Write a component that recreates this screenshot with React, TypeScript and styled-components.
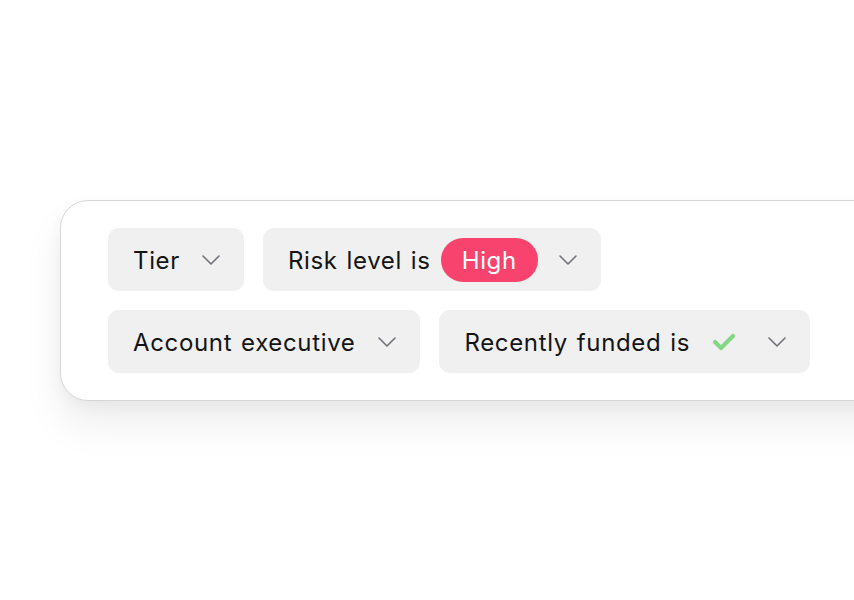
import React from "react";
import styled, { createGlobalStyle } from "styled-components";

const Global = createGlobalStyle`
  html, body { margin: 0; padding: 0; background: #ffffff; }
  body { font-family: Inter, "Noto Sans", sans-serif; overflow: hidden; }
`;

const Page = styled.div`
  width: 854px;
  height: 600px;
  overflow: hidden;
  padding: 200px 0 0 60px;
  box-sizing: border-box;
`;

const Card = styled.div`
  width: 900px;
  box-sizing: border-box;
  background: #ffffff;
  border: 1px solid #d6d6d6;
  border-radius: 28px;
  padding: 27px 0 27px 47px;
  display: flex;
  flex-direction: column;
  gap: 19px;
  box-shadow: 0 24px 40px rgba(0, 0, 0, 0.07), 0 6px 14px rgba(0, 0, 0, 0.04);
`;

const Row = styled.div`
  display: flex;
  gap: 19px;
`;

const Chip = styled.div`
  height: 63px;
  box-sizing: border-box;
  display: flex;
  align-items: center;
  padding: 2px 23px 0 25px;
  background: #f0f0f1;
  border-radius: 11px;
  color: #141414;
  font-size: 24px;
  letter-spacing: 0.65px;
  word-spacing: 1.5px;
`;

const Label = styled.span`
  white-space: pre;
`;

const Pill = styled.span`
  margin-left: 10px;
  margin-top: -2px;
  height: 44px;
  padding: 2px 21px 0;
  box-sizing: border-box;
  display: inline-flex;
  align-items: center;
  border-radius: 22px;
  background: #f7436d;
  color: #ffffff;
  font-size: 24px;
`;

const Chevron = styled.svg<{ $gap: number }>`
  margin-left: ${(p) => p.$gap}px;
  margin-top: -2px;
  flex: none;
`;

const Check = styled.svg`
  margin-left: 22px;
  margin-top: -2px;
  flex: none;
`;

const Down = ({ gap }: { gap: number }) => (
  <Chevron $gap={gap} width="20" height="12" viewBox="0 0 20 12">
    <polyline points="2,2 10,10 18,2" fill="none" stroke="#6f6f78" strokeWidth="1.6" strokeLinecap="round" strokeLinejoin="round" />
  </Chevron>
);

export default function App() {
  return (
    <>
      <Global />
      <Page>
        <Card>
          <Row>
            <Chip>
              <Label>Tier</Label>
              <Down gap={21} />
            </Chip>
            <Chip>
              <Label>Risk level is</Label>
              <Pill>High</Pill>
              <Down gap={20} />
            </Chip>
          </Row>
          <Row>
            <Chip>
              <Label>Account executive</Label>
              <Down gap={22} />
            </Chip>
            <Chip>
              <Label>Recently funded is</Label>
              <Check width="24" height="20" viewBox="0 0 24 20">
                <polyline points="3,10 9,16 21,4" fill="none" stroke="#80d884" strokeWidth="4.2" strokeLinecap="round" strokeLinejoin="round" />
              </Check>
              <Down gap={31} />
            </Chip>
          </Row>
        </Card>
      </Page>
    </>
  );
}
